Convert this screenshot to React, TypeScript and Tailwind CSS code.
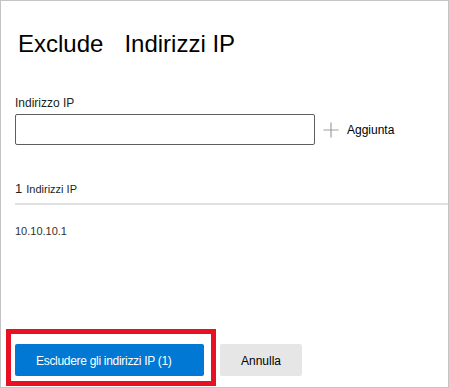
import React from "react";

const font = { fontFamily: '"Liberation Sans", Arial, sans-serif' };

function PlusIcon() {
  return (
    <svg width="16" height="16" viewBox="0 0 16 16" className="shrink-0">
      <path d="M8 0.5v15M0.5 8h15" stroke="#a19f9d" strokeWidth="1.2" fill="none" />
    </svg>
  );
}

export default function App() {
  return (
    <div
      className="relative w-[449px] h-[388px] bg-white border border-[#c4c4c4] text-black"
      style={font}
    >
      <div className="flex flex-col h-full pt-[27px] pb-[11px]">
        <h1 className="pl-[17px] text-[24px] leading-[32px] font-normal whitespace-nowrap">
          Exclude<span className="ml-[21px]">Indirizzi IP</span>
        </h1>

        <div className="pl-[14px] mt-[35px]">
          <label className="block text-[12px] leading-[16px] text-[#201f1e]">Indirizzo IP</label>
          <div className="flex items-center mt-[3px]">
            <input
              type="text"
              className="w-[300px] h-[31px] border border-[#605e5c] rounded-[2px] px-2 text-[12px] outline-none"
            />
            <button className="flex items-center gap-2 ml-2 text-[12px] leading-[16px] text-black">
              <PlusIcon />
              <span>Aggiunta</span>
            </button>
          </div>
        </div>

        <div className="pl-[14px] mt-[35px]">
          <div className="leading-[16px] pb-[6px] text-[#201f1e]">
            <span className="text-[13px] font-medium">1</span>
            <span className="text-[11px] ml-[4px]">Indirizzi IP</span>
          </div>
          <div className="h-[2px] bg-[#e1e1e1]" />
          <div className="mt-[18px] text-[11px] leading-[16px] text-[#323130]">10.10.10.1</div>
        </div>

        <div className="mt-auto pl-[14px] flex gap-4">
          <button className="w-[189px] h-8 pt-[2px] pl-[21px] text-left rounded-[2px] bg-[#0078d4] text-white text-[12px] tracking-[-0.3px]">
            Escludere gli indirizzi IP (1)
          </button>
          <button className="w-[82px] h-8 pt-[2px] rounded-[2px] bg-[#e6e6e6] text-black text-[12px]">
            Annulla
          </button>
        </div>
      </div>

      <div className="absolute left-[5px] top-[328px] w-[210px] h-[57px] border-[5px] border-[#e81123] pointer-events-none" />
    </div>
  );
}
